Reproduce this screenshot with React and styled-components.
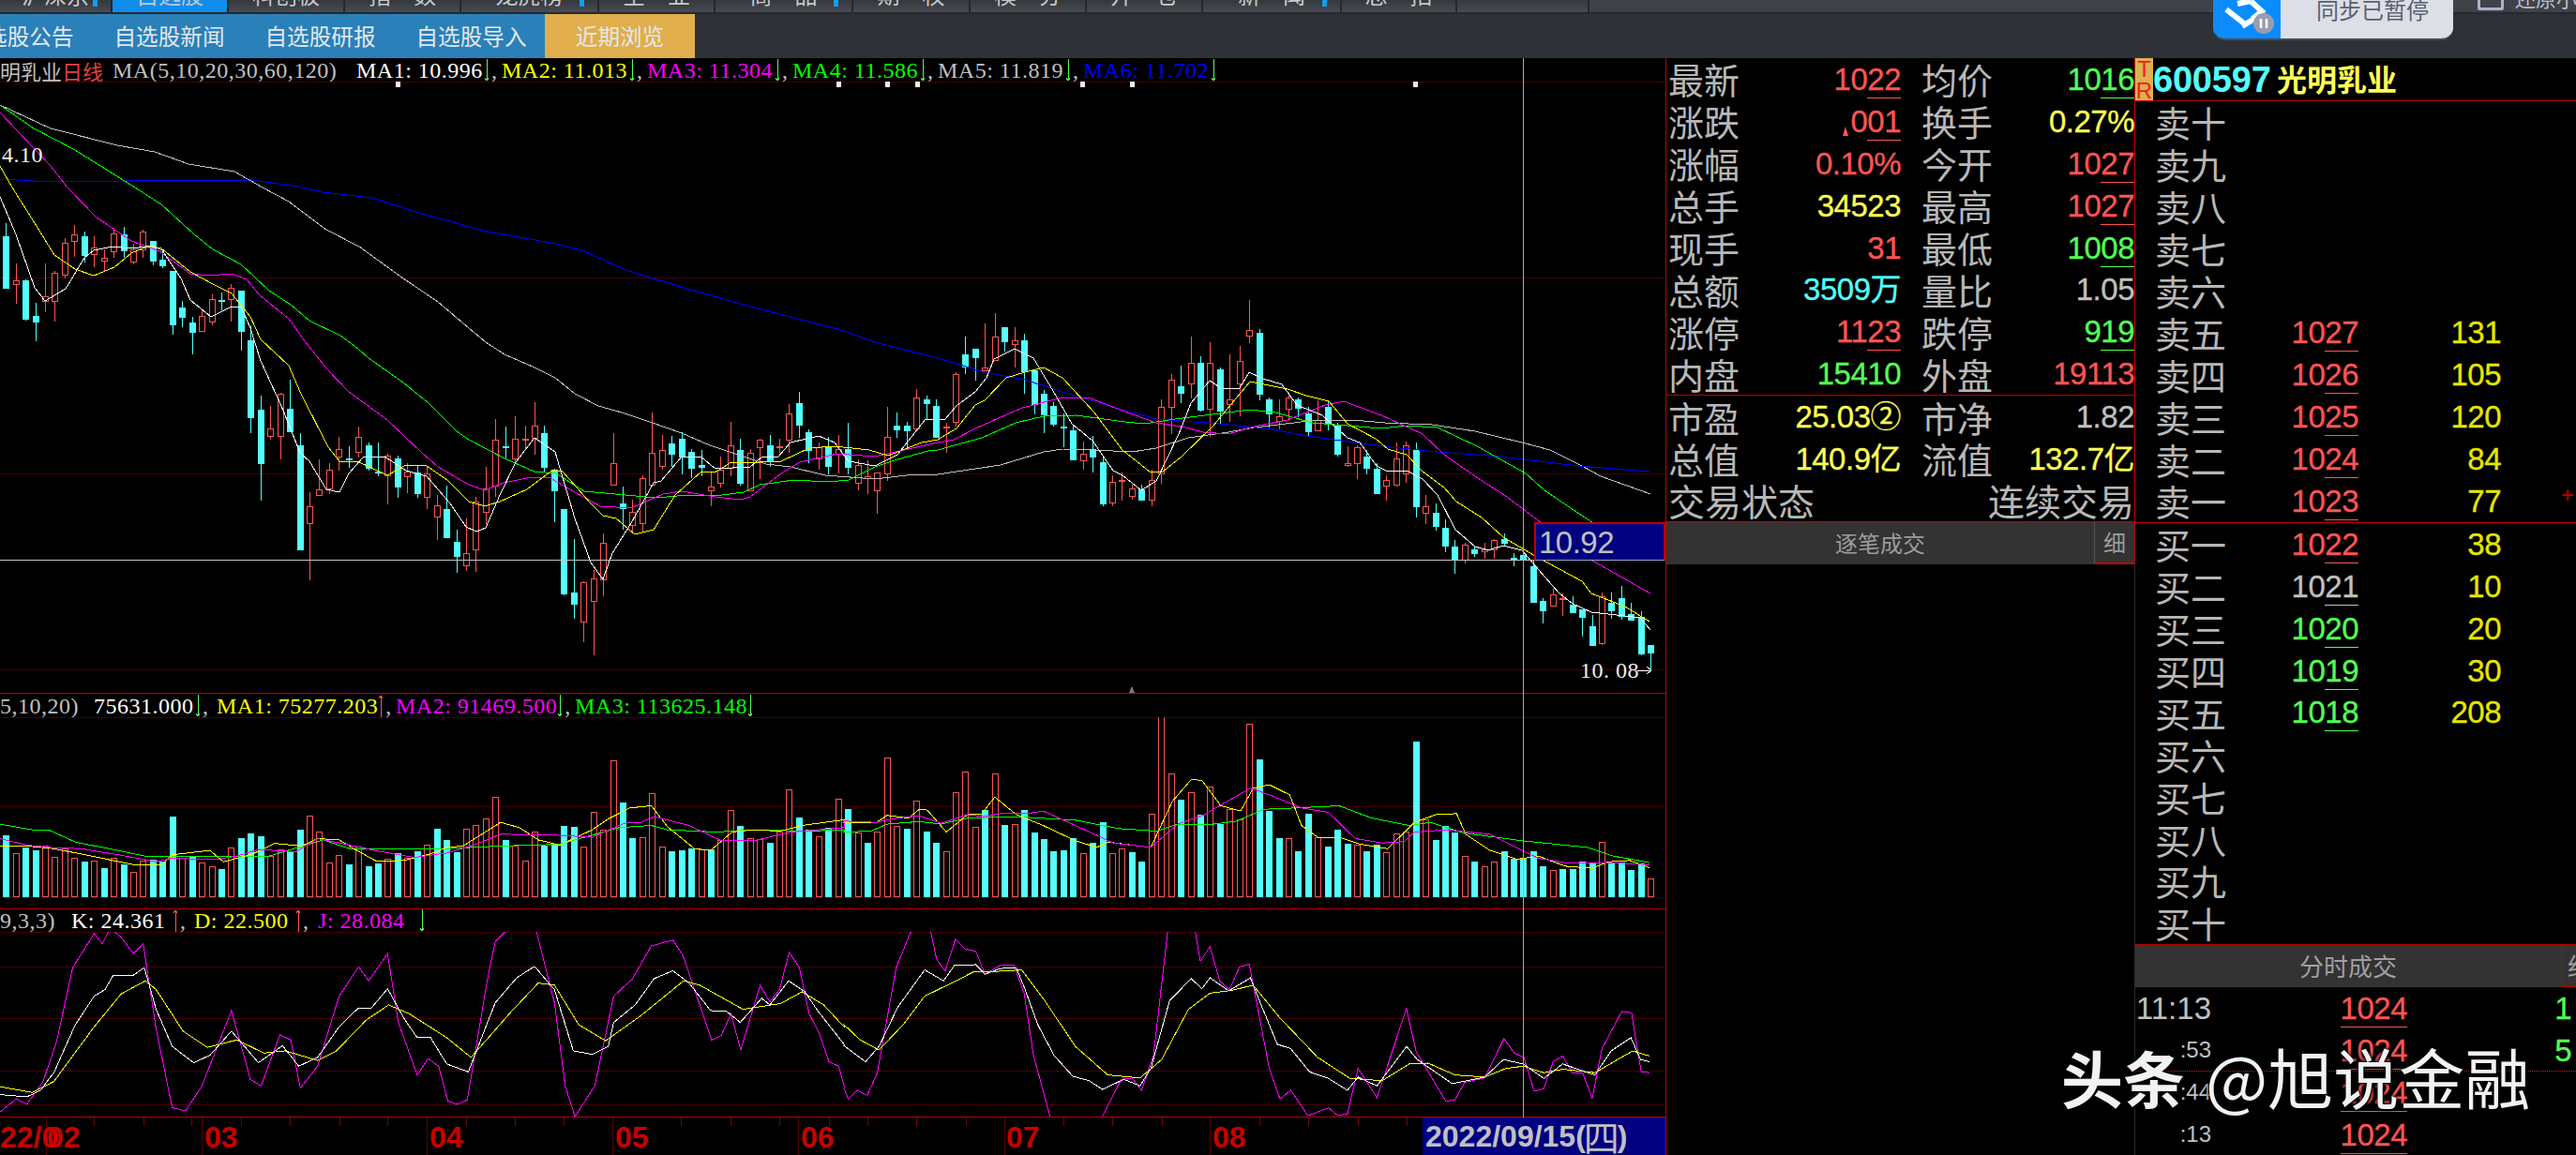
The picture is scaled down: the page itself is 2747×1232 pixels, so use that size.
import React from "react";
import styled, { createGlobalStyle } from "styled-components";

const GlobalStyle = createGlobalStyle`
  html, body {
    margin: 0;
    background: #000;
    overflow: hidden;
  }
  * {
    box-sizing: border-box;
  }
`;

const CJK = `"Noto Sans CJK SC", "Liberation Sans", sans-serif`;
const NUM = `"Liberation Sans", "Noto Sans CJK SC", sans-serif`;
const SERIF = `"Liberation Serif", "Noto Sans CJK SC", serif`;

const RED = "#ff5454";
const GREEN = "#54ff54";
const YELLOW = "#ffff54";
const CYAN = "#54ffff";
const GRAY = "#c0c0c0";
const LINE_RED = "#c00000";

// candles traced from the chart: type, body top, body bottom, high, low (3x crop units)
const SEG_A = `d156,323,115,323 u298,311,243,372 d297,420,295,426 d411,429,370,492 u349,365,243,399 u274,365,268,429 u178,281,163,290 u151,173,120,222 d156,216,141,240 u193,215,156,255 u226,236,198,270 u148,206,130,225 d150,201,126,225 u199,239,180,246 u142,199,135,225 d171,234,171,249 d231,249,205,258 d267,438,267,471 d384,414,363,447 d432,462,414,534 u412,459,390,459 u358,429,342,441 d360,362,336,393 u322,359,309,429 d330,459,330,522 d489,735,440,786 d711,882,666,1002 u772,797,699,807 u661,795,657,870 d708,780,615,780 d825,1158,786,1158 u1021,1076,975,1257 u967,986,870,986 u904,964,882,981 u838,863,798,906 d867,870,828,897 u799,848,765,864 d825,897,816,906 d909,912,816,924 u859,922,852,1014 d867,957,858,993 u910,926,882,978 d912,978,888,993 u916,992,895,1029 u1018,1055,984,1128 d1029,1119,954,1119 d1134,1179,1095,1233 u1170,1211,1059,1227`;
const SEG_B = `u857,1010,840,1080 u814,890,743,928 u658,806,591,840 d679,683,615,717 u655,719,582,735 u656,659,612,690 u613,651,537,705 d636,744,612,760 d757,819,750,921 d879,1150,879,1155 d1146,1182,975,1230 u1113,1241,1110,1305 u1102,1175,1075,1347 u988,1104,957,1158 u733,803,636,803 d861,878,807,945 u889,932,850,957 u781,926,770,954 u700,803,570,803 u691,741,642,753 d669,702,645,744 d654,712,633,768 d696,747,687,780 d738,744,690,774 u808,821,762,870 u753,797,711,810 u676,747,600,774 d690,796,654,804 u700,819,687,822 u658,683,654,783 d675,726,642,744 u679,683,654,699 u574,657,543,699 d540,609,504,651 d633,692,624,732 u682,719,666,753 d681,741,648,768 u688,703,642,765 d687,744,603,768 u738,797,720,819 u775,782,723,831 u762,819,762,894 u649,767,552,789 d612,624,570,651 d612,627,600,690 u523,623,495,625 d528,540,516,592 d549,648,528,648 u615,618,603,699 u448,602,441,615 d384,423,327,447 d366,393,366,468 u427,437,285,437 u328,402,252,402 d297,342,297,375 u340,351,297,426 d339,438,318,510 d435,543,435,576 d510,576,498,636 d549,606,537,615 d615,618,573,681 d627,720,610,720 u702,725,663,753 d687,711,645,762 d729,861,714,870 u793,860,771,870 u786,789,762,852 u814,839,801,849 d816,849,801,849 u787,851,754,870 u553,765,528,798 u466,554,447,639 d486,507,420,540 u412,479,327,525 d411,561,390,567 u412,560,345,648 d432,564,426,609 u529,545,384,600 u406,479,357,582 u307,326,210,348 d315,510,303,531 d528,573,522,618 u583,597,528,624 u522,560,510,597 d528,555,522,585 d573,630,552,648 u595,629,531,629 d552,603,531,627 d612,702,603,711 u733,740,678,744 u682,734,675,783 d711,747,690,768 d750,828,732,831 u787,806,771,852 u718,803,666,807 u676,767,663,795`;
const SEG_C = `d300,482,276,515 u481,503,444,537 d501,545,471,557 d549,608,522,626 d609,652,588,696 u604,652,597,663 d618,630,606,642 u620,625,597,648 u589,619,585,648 d585,597,567,606 d646,652,630,672 d636,652,597,690 d672,786,652,786 d783,813,774,855 u762,798,744,801 u774,778,759,831 d795,819,768,819 d810,834,810,897 d864,924,828,924 u769,918,756,924 d789,813,756,840 d774,832,735,843 d825,843,789,843 d836,951,816,957 d924,948,924,1005`;

const parseSeg = (text, base) =>
  text.split(" ").map((c) => {
    const [top, bottom, high, low] = c.slice(1).split(",").map((v) => base + Number(v) / 3);
    return { up: c[0] === "u", top, bottom, high, low };
  });

const CANDLES = [...parseSeg(SEG_A, 200), ...parseSeg(SEG_B, 250), ...parseSeg(SEG_C, 380)];

const VOLUME = `d838 u880 d867 d872 u862 u887 u868 u890 d898 u896 d913 u890 d906 u923 u896 d895 d898 d795 u890 d885 u900 u910 d915 u866 d846 d835 d840 u885 u870 d875 d825 u793 u831 u900 u883 d906 u865 d910 d902 u893 d880 u890 d876 u860 d823 d850 d878 u823 u814 u801 u750 d850 u862 u897 u829 d862 d860 d818 d820 u865 u786 u826 u668 d763 d846 u842 u743 u865 d875 d872 d868 u870 d870 u850 u780 d818 u845 u848 d855 u830 u733 d798 d825 u840 d822 u755 d778 u833 d855 u830 u660 u817 d823 u760 d831 d855 u875 u741 u692 u820 d780 u698 d814 u812 d780 d833 d848 d876 d872 d844 u880 d855 d808 u880 u868 d878 d898 u790 u566 u698 d758 u740 d792 u728 d813 u778 u803 u583 d665 d782 d846 u845 d874 d790 u843 d865 d825 d858 u860 d874 d860 u878 u835 u830 d625 u803 d850 d818 d832 u885 d898 u910 u898 d876 d892 d892 d875 d910 u918 d916 d916 d898 d903 u853 d900 d901 d918 d902 u938`.split(" ");

const candleX = (i) => 6.3 + 10.44 * i;

const MA_WHITE = [0,210,17,250,37,307,48,321,70,308,90,275,100,267,120,263,140,265,163,262,173,267,193,297,203,320,225,338,247,327,257,327,267,350,278,385,300,433,320,483,330,492,348,522,362,525,372,505,387,488,410,487,433,502,455,508,480,537,497,562,508,567,518,563,533,528,550,493,570,467,592,482,613,553,630,600,643,618,653,590,673,558,697,515,705,513,727,487,747,487,763,500,800,498,813,487,830,487,843,472,873,465,890,472,905,492,933,497,957,485,987,447,1008,447,1020,433,1040,418,1052,403,1060,383,1082,372,1102,382,1123,417,1143,452,1165,470,1187,502,1197,507,1217,523,1233,513,1257,463,1270,430,1290,406,1302,414,1322,414,1332,397,1347,404,1367,410,1383,432,1410,443,1437,467,1450,472,1468,497,1478,502,1500,502,1517,511,1533,528,1552,565,1573,583,1587,587,1603,582,1623,587,1647,615,1663,633,1677,644,1697,653,1733,657,1749,659,1760,672];
const MA_YELLOW = [0,177,13,200,37,238,58,272,80,287,100,294,122,285,140,270,157,263,172,265,203,290,227,303,247,313,267,338,278,362,308,390,320,418,350,477,362,492,383,493,413,507,433,496,455,497,477,512,500,535,517,540,533,535,562,522,590,501,600,503,630,537,643,550,657,553,677,570,697,565,720,528,748,503,762,504,780,493,810,493,833,492,863,478,890,476,927,480,947,486,983,472,1000,469,1020,457,1040,432,1050,427,1073,403,1093,397,1113,392,1133,403,1167,440,1197,480,1227,504,1240,503,1260,487,1293,455,1333,407,1373,415,1393,422,1417,428,1437,452,1467,468,1480,479,1500,485,1517,503,1540,520,1553,535,1580,552,1603,573,1637,593,1687,620,1697,633,1733,647,1759,663];
const MA_MAGENTA = [0,120,54,177,72,200,103,232,140,257,170,268,203,292,223,294,247,292,263,298,277,315,308,340,322,360,348,393,372,418,413,448,450,483,467,498,500,517,517,523,537,515,567,509,587,510,613,525,640,540,673,542,707,527,727,524,763,530,790,533,800,530,833,505,853,493,893,484,933,487,973,478,1000,472,1017,469,1040,457,1090,435,1133,424,1163,425,1197,438,1233,451,1260,455,1283,461,1310,463,1337,455,1373,448,1413,432,1433,428,1473,443,1493,452,1517,463,1540,485,1573,508,1607,530,1640,555,1698,598,1760,633];
const MA_GREEN = [0,112,36,137,80,160,144,200,172,218,207,250,227,266,257,282,287,310,310,325,330,342,363,358,382,372,393,382,430,408,457,430,487,460,500,469,540,490,570,503,593,505,623,524,667,528,700,531,733,528,770,528,793,525,810,517,847,512,883,514,905,512,933,498,957,490,990,481,1000,480,1047,467,1083,451,1113,444,1147,443,1200,450,1220,452,1253,447,1293,442,1333,437,1360,440,1400,451,1473,457,1500,454,1533,456,1577,477,1627,505,1647,523,1687,550,1760,597];
const MA_GRAY = [0,112,54,137,125,155,165,162,201,175,250,183,280,200,308,215,348,245,383,263,430,297,467,322,500,350,518,365,538,378,570,392,592,403,613,420,638,433,663,440,693,450,727,462,757,475,787,485,817,495,843,498,880,507,933,511,967,507,1000,506,1020,503,1067,496,1113,482,1133,479,1167,480,1207,482,1233,478,1267,467,1310,461,1337,456,1380,451,1400,448,1443,448,1477,451,1527,453,1573,460,1623,472,1653,480,1687,497,1707,508,1760,527];
const MA_BLUE = [0,191,36,193,134,193,268,192,312,198,344,205,397,211,446,227,487,238,518,247,537,250,593,260,623,268,667,288,733,308,800,327,847,339,900,353,933,365,1000,382,1050,397,1093,405,1133,418,1183,433,1233,447,1300,452,1350,457,1400,466,1483,477,1533,482,1600,487,1683,497,1760,503];

// lower panes were traced from two crops, left one starts at x 0, right one at x 900
const scaled = (left, right) => {
  const out = [];
  const push = (list, offset) => {
    for (let i = 0; i < list.length; i += 2) {
      out.push(offset + list[i] / 1.742, 500 + list[i + 1] / 2.142);
    }
  };
  push(left, 0);
  push(right, 900);
  return out;
};

const VOL_YELLOW = scaled(
  [0,862,50,862,100,868,170,885,250,905,300,905,320,882,390,872,415,898,470,880,510,856,560,862,590,845,630,848,660,870,700,897,750,895,800,880,830,865,860,862,930,808,965,820,1000,848,1040,860,1100,825,1130,800,1170,775,1210,770,1240,818,1290,868,1320,872,1360,830,1400,825,1450,828,1490,815,1568,802],
  [0,808,60,808,80,792,120,798,140,778,155,780,190,830,230,790,255,790,280,750,320,790,370,815,430,850,470,865,490,853,570,865,610,760,645,710,665,712,700,770,737,782,760,730,790,722,828,745,850,815,880,842,920,842,960,858,1010,868,1060,808,1100,790,1138,788,1155,835,1200,872,1250,892,1290,885,1340,908,1390,913,1420,898,1460,895,1497,912]
);
const VOL_MAGENTA = scaled(
  [0,845,50,860,100,866,150,868,220,882,290,898,320,890,400,893,440,885,480,870,550,875,590,845,630,855,700,873,770,888,830,878,880,860,930,835,1030,837,1100,842,1160,810,1190,808,1215,795,1280,815,1340,850,1400,850,1470,830,1568,820],
  [0,805,60,808,100,798,140,793,180,810,230,790,260,795,290,788,340,788,370,782,430,815,500,855,570,865,620,812,670,790,700,768,755,730,790,745,850,775,900,785,950,845,1000,855,1040,852,1060,830,1120,825,1200,835,1240,860,1290,890,1340,900,1420,900,1497,905]
);
const VOL_GREEN = scaled(
  [0,812,60,825,90,825,140,853,210,870,270,885,400,885,500,885,600,848,650,868,830,868,930,862,1040,858,1150,820,1210,815,1240,825,1330,830,1400,825,1500,828,1568,825],
  [0,830,50,828,80,812,140,806,180,812,230,798,320,795,430,803,510,822,580,828,620,812,680,813,730,805,780,778,840,775,920,770,980,798,1050,815,1090,808,1150,832,1260,850,1380,865,1430,885,1497,900]
);

const KDJ_K = scaled(
  [0,1430,50,1435,75,1420,100,1380,140,1270,175,1205,195,1190,210,1158,248,1157,268,1140,290,1235,320,1320,360,1357,390,1340,430,1285,480,1357,525,1318,555,1365,590,1345,630,1275,665,1233,690,1232,720,1188,750,1255,775,1300,800,1300,830,1360,870,1378,920,1220,960,1163,993,1137,1030,1190,1065,1330,1100,1338,1130,1320,1140,1265,1180,1225,1215,1165,1250,1147,1280,1175,1320,1238,1350,1240,1375,1265,1415,1210,1430,1225,1465,1170,1495,1195,1520,1240,1568,1315],
  [0,1318,40,1355,65,1320,100,1230,150,1145,185,1170,205,1135,245,1133,262,1155,290,1142,320,1140,335,1185,360,1270,390,1340,425,1388,455,1398,480,1418,520,1395,550,1410,570,1370,605,1215,645,1165,665,1188,680,1163,715,1193,755,1163,770,1210,805,1315,830,1325,865,1378,900,1393,935,1420,955,1390,990,1410,1045,1320,1065,1350,1130,1405,1190,1390,1225,1350,1262,1360,1300,1393,1335,1360,1395,1385,1425,1330,1462,1300,1480,1350,1497,1355]
);
const KDJ_D = scaled(
  [0,1412,60,1425,100,1400,175,1275,225,1200,270,1170,290,1190,340,1285,385,1322,440,1305,490,1335,530,1330,590,1352,625,1330,680,1260,722,1225,760,1245,830,1300,875,1345,950,1240,1000,1175,1030,1180,1075,1270,1125,1307,1190,1250,1270,1170,1300,1180,1380,1235,1450,1222,1490,1195,1530,1225,1568,1275],
  [0,1270,30,1305,65,1328,110,1270,150,1205,200,1175,240,1150,262,1150,330,1145,370,1210,430,1320,490,1385,550,1392,590,1350,640,1235,680,1198,720,1192,760,1180,810,1255,880,1345,940,1393,1000,1398,1050,1360,1085,1358,1135,1385,1190,1390,1230,1370,1262,1365,1300,1380,1335,1372,1395,1380,1465,1330,1497,1342]
);
const KDJ_J = scaled(
  [0,1470,30,1440,50,1452,80,1400,105,1310,135,1140,175,1062,190,1085,205,1050,225,1070,248,1108,266,1085,290,1280,320,1460,345,1467,375,1410,430,1238,465,1395,485,1410,520,1293,540,1305,558,1415,590,1365,630,1205,666,1138,685,1170,720,1108,740,1265,775,1385,795,1348,815,1365,832,1445,850,1452,868,1442,905,1170,920,1080,945,1050,995,1050,1030,1220,1050,1410,1068,1480,1105,1410,1140,1205,1175,1165,1210,1090,1250,1077,1268,1110,1322,1305,1340,1295,1358,1245,1376,1328,1412,1180,1430,1218,1448,1190,1466,1105,1485,1140,1503,1245,1522,1290,1540,1355,1558,1365,1568,1410],
  [0,1415,8,1440,25,1420,43,1432,62,1380,97,1140,130,1040,158,1040,172,1120,188,1148,207,1075,225,1097,245,1103,262,1155,290,1135,316,1135,335,1200,352,1340,385,1490,455,1490,480,1480,515,1395,535,1392,553,1420,575,1340,603,1040,650,1040,662,1125,680,1092,698,1170,716,1190,735,1138,753,1132,790,1370,810,1440,830,1420,862,1478,900,1460,917,1477,935,1475,955,1370,990,1437,1045,1233,1063,1332,1118,1445,1135,1442,1153,1402,1190,1392,1226,1302,1245,1335,1263,1345,1282,1422,1300,1417,1317,1355,1335,1342,1353,1380,1372,1380,1390,1438,1408,1325,1445,1240,1463,1243,1481,1378,1497,1380]
);

const toPoints = (list) => {
  const parts = [];
  for (let i = 0; i < list.length; i += 2) parts.push(`${list[i]},${list[i + 1]}`);
  return parts.join(" ");
};

const TABS = [
  { w: 120, label: "沪深京", mark: true },
  { w: 124, label: "自选股", active: true },
  { w: 124, label: "科创板" },
  { w: 124, label: "指　数" },
  { w: 147, label: "龙虎榜", mark: true },
  { w: 124, label: "全　业" },
  { w: 147, label: "商　品", mark: true },
  { w: 125, label: "期　权" },
  { w: 124, label: "模　分" },
  { w: 124, label: "开　仓" },
  { w: 148, label: "新　闻", mark: true },
  { w: 123, label: "总　招" },
  { w: 141, label: "" },
];

const STATS = [
  ["最新", "1022", RED, 1, "均价", "1016", GREEN, 1],
  ["涨跌", "001", RED, 1, "换手", "0.27%", YELLOW, 0],
  ["涨幅", "0.10%", RED, 0, "今开", "1027", RED, 1],
  ["总手", "34523", YELLOW, 0, "最高", "1027", RED, 1],
  ["现手", "31", RED, 0, "最低", "1008", GREEN, 1],
  ["总额", "3509万", CYAN, 0, "量比", "1.05", GRAY, 0],
  ["涨停", "1123", RED, 1, "跌停", "919", GREEN, 1],
  ["内盘", "15410", GREEN, 0, "外盘", "19113", RED, 0],
];

const STATS2 = [
  ["市盈", "25.03②", YELLOW, 0, "市净", "1.82", GRAY, 0],
  ["总值", "140.9亿", YELLOW, 0, "流值", "132.7亿", YELLOW, 0],
];

const ASKS = [
  ["卖十"], ["卖九"], ["卖八"], ["卖七"], ["卖六"],
  ["卖五", "1027", "131", RED],
  ["卖四", "1026", "105", RED],
  ["卖三", "1025", "120", RED],
  ["卖二", "1024", "84", RED],
  ["卖一", "1023", "77", RED],
];

const BIDS = [
  ["买一", "1022", "38", RED],
  ["买二", "1021", "10", GRAY],
  ["买三", "1020", "20", GREEN],
  ["买四", "1019", "30", GREEN],
  ["买五", "1018", "208", GREEN],
  ["买六"], ["买七"], ["买八"], ["买九"], ["买十"],
];

const TRADES = [
  { time: "11:13", big: true, price: "1024", vol: "1" },
  { time: ":53", price: "1024", vol: "5" },
  { time: ":44", price: "1024" },
  { time: ":13", price: "1024" },
];

const AXIS_LABELS = [
  { x: 0, text: "22/0" },
  { x: 50, text: "02" },
  { x: 218, text: "03" },
  { x: 458, text: "04" },
  { x: 656, text: "05" },
  { x: 854, text: "06" },
  { x: 1073, text: "07" },
  { x: 1293, text: "08" },
];
const AXIS_MAJOR = [49, 215, 455, 653, 851, 1071, 1290];
const AXIS_MINOR = [100, 153, 204, 257, 309, 362, 413, 497, 549, 601, 726, 779, 831, 884, 925, 977, 1030, 1134, 1186, 1239, 1343, 1395, 1448, 1500];
const TOP_DOTS = [424, 894, 946, 978, 1154, 1207, 1509];

const Page = styled.div`
  width: 2747px;
  height: 1232px;
  position: relative;
  overflow: hidden;
  background: #000;
  display: flex;
  flex-direction: column;
`;

const TopBar = styled.div`
  height: 15px;
  flex: none;
  display: flex;
  background: #3f4248;
  border-bottom: 2px solid #26282c;
`;

const Tab = styled.div`
  width: ${({ $w }) => $w}px;
  flex: none;
  height: 13px;
  position: relative;
  overflow: hidden;
  display: flex;
  align-items: flex-end;
  justify-content: center;
  padding-bottom: 7px;
  font: 24px/1 ${CJK};
  color: #c8c8c8;
  background: ${({ $active }) => ($active ? "#0f8ded" : "linear-gradient(#35383d, #484b52)")};
  border-right: 2px solid #26282c;
`;

const TabMark = styled.span`
  position: absolute;
  right: 14px;
  top: 0;
  width: 5px;
  height: 7px;
  background: #0aa0f0;
`;

const Restore = styled.div`
  margin-left: auto;
  display: flex;
  align-items: flex-end;
  gap: 12px;
  height: 13px;
  overflow: hidden;
  padding-bottom: 5px;
  width: 105px;
  font: 22px/1 ${CJK};
  color: #b8bcc8;
  white-space: nowrap;
`;

const RestoreIcon = styled.span`
  width: 28px;
  height: 20px;
  flex: none;
  margin-bottom: -3px;
  border: 3px solid #aab2cc;
  border-radius: 2px;
`;

const SyncPill = styled.div`
  position: absolute;
  left: 2360px;
  top: 0;
  width: 256px;
  height: 43px;
  display: flex;
  overflow: hidden;
  border-radius: 0 0 13px 13px;
  border-bottom: 2px solid #4a4d58;
`;

const SyncLogo = styled.div`
  width: 72px;
  height: 100%;
  flex: none;
  background: #0a8cff;

  svg {
    display: block;
  }
`;

const SyncText = styled.div`
  flex: 1;
  background: #dcdfe6;
  padding: 0 0 0 38px;
  font: 24px/24px ${CJK};
  color: #5a6072;

  span {
    display: block;
    margin-top: -2px;
  }
`;

const SubBar = styled.div`
  height: 47px;
  flex: none;
  display: flex;
  background: #2e3136;
`;

const SubGroup = styled.div`
  width: 581px;
  flex: none;
  display: flex;
  overflow: hidden;
  background: #2a80b9;
`;

const SubItem = styled.div`
  width: 161px;
  flex: none;
  display: flex;
  align-items: center;
  justify-content: center;
  margin-left: ${({ $first }) => ($first ? "-61px" : "0")};
  font: 23.6px/1 ${CJK};
  color: #e4e8ec;
  white-space: nowrap;
`;

const SubRecent = styled(SubItem)`
  width: 160px;
  background: #e0ae4c;
`;

const Body = styled.div`
  flex: 1;
  display: flex;
  min-height: 0;
`;

const ChartColumn = styled.div`
  width: 1777px;
  flex: none;
  position: relative;
  display: flex;
  flex-direction: column;
  border-right: 1px solid ${LINE_RED};
`;

const Pane = styled.div`
  height: ${({ $h }) => $h}px;
  flex: none;
  position: relative;
  display: flex;
  flex-direction: column;
  border-bottom: 1px solid ${LINE_RED};

  svg {
    display: block;
    flex: 1;
    min-height: 0;
  }
`;

const Legend = styled.div`
  height: ${({ $h }) => $h}px;
  flex: none;
  display: flex;
  align-items: center;
  overflow: hidden;
  white-space: nowrap;
  font: 24px/1 ${SERIF};
  color: ${GRAY};
`;

const LegendName = styled.span`
  font: 22px/1 ${CJK};
  color: ${({ $c }) => $c};
`;

const LegendItem = styled.span`
  width: ${({ $w }) => $w}px;
  flex: none;
  display: inline-flex;
  align-items: center;
`;

const LegendText = styled.span`
  min-width: ${({ $w }) => $w || 0}px;
  letter-spacing: 0.5px;
  color: ${({ $c }) => $c || GRAY};
`;

const Comma = styled.span`
  width: 10px;
  text-align: center;
  color: ${GRAY};
`;

const PriceTag = styled.span`
  position: absolute;
  left: ${({ $x }) => $x}px;
  top: ${({ $y }) => $y}px;
  font: 24px/1 ${SERIF};
  letter-spacing: 0.5px;
  color: #f0f0f0;
  white-space: nowrap;
`;

const CrossH = styled.div`
  position: absolute;
  left: 0;
  right: 0;
  top: 535px;
  height: 1px;
  background: #c4c4c4;
`;

const CrossV = styled.div`
  position: absolute;
  left: 1624px;
  top: 0;
  bottom: 40px;
  width: 1px;
  background: #a8a8a8;
`;

const ValueBadge = styled.div`
  position: absolute;
  left: 1636px;
  top: 495px;
  width: 140px;
  height: 41px;
  display: flex;
  align-items: center;
  padding-left: 3px;
  background: #000080;
  border: 2px solid ${LINE_RED};
  border-bottom: 1px solid #9aa0d0;
  font: 33px/1 ${NUM};
  letter-spacing: -0.5px;
  color: ${GRAY};
`;

const Axis = styled.div`
  height: 40px;
  flex: none;
  position: relative;
  overflow: hidden;

  svg {
    display: block;
  }
`;

const AxisLabel = styled.span`
  position: absolute;
  top: 3px;
  font: bold 32px/36px ${NUM};
  color: #c80000;
`;

const DateBadge = styled.div`
  position: absolute;
  right: 0;
  top: 0;
  width: 259px;
  height: 40px;
  display: flex;
  align-items: center;
  padding-left: 3px;
  background: #000080;
  font: bold 32px/1 ${NUM};
  color: ${GRAY};
  white-space: nowrap;
`;

const DateWeek = styled.span`
  font: 38px/1 ${CJK};
  margin: 0 -2px;
`;

const QuotePanel = styled.div`
  width: 500px;
  flex: none;
  display: flex;
  flex-direction: column;
`;

const StatsBlock = styled.div`
  flex: none;
  padding-left: 2px;
  border-right: 1px solid ${LINE_RED};
  border-bottom: 1px solid ${LINE_RED};
`;

const StatRow = styled.div`
  height: 44.9px;
  display: grid;
  grid-template-columns: 77px 171px 98px 151px;
  align-items: center;
`;

const StatLabel = styled.div`
  font: 38px/1 ${CJK};
  color: #b8b8b8;
  white-space: nowrap;
  padding-left: ${({ $second }) => ($second ? "22px" : "0")};
`;

const Value = styled.div`
  position: relative;
  justify-self: end;
  font: 33px/1 ${NUM};
  letter-spacing: -0.5px;
  -webkit-text-stroke: 0.3px ${({ $c }) => $c};
  color: ${({ $c }) => $c};
  white-space: nowrap;

  &::after {
    content: "";
    display: ${({ $line }) => ($line ? "block" : "none")};
    position: absolute;
    right: 0;
    bottom: -4px;
    width: ${({ $wide }) => ($wide ? "100%" : "36px")};
    height: 1px;
    background: ${({ $c }) => $c};
  }
`;

const UpMark = styled.span`
  position: absolute;
  left: -8px;
  bottom: 1px;
  width: 0;
  height: 0;
  border-left: 3.5px solid transparent;
  border-right: 3.5px solid transparent;
  border-bottom: 10px solid ${RED};
`;

const StateRow = styled.div`
  height: 44px;
  display: flex;
  align-items: center;
  justify-content: space-between;
  font: 39px/1 ${CJK};
  color: #b8b8b8;
`;

const FeedBand = styled.div`
  height: 45px;
  flex: none;
  display: flex;
  background: #333;
  font: 24px/1 ${CJK};
  color: #9c9c9c;
`;

const FeedTitle = styled.div`
  flex: 1;
  display: flex;
  align-items: center;
  justify-content: center;
`;

const FeedDetail = styled.div`
  width: 44px;
  flex: none;
  display: flex;
  align-items: center;
  justify-content: center;
  border-left: 1px solid #555;
  border-bottom: 2px solid ${LINE_RED};
  border-right: 1px solid ${LINE_RED};
`;

const FeedEmpty = styled.div`
  flex: 1;
  border-right: 1px solid #2a2a2a;
`;

const OrderPanel = styled.div`
  flex: 1;
  position: relative;
  display: flex;
  flex-direction: column;
  overflow: hidden;
`;

const CodeHeader = styled.div`
  height: 46px;
  flex: none;
  display: flex;
  align-items: center;
  border-bottom: 1px solid ${LINE_RED};
`;

const TrBox = styled.div`
  width: 19px;
  height: 45px;
  flex: none;
  display: flex;
  flex-direction: column;
  align-items: center;
  justify-content: center;
  background: #e0b050;
  font: 24px/23px ${NUM};
  color: #f02020;
`;

const Code = styled.span`
  font: bold 38px/1 ${NUM};
  letter-spacing: -0.2px;
  color: ${CYAN};
  width: 132px;
`;

const StockName = styled.span`
  font: bold 32px/1 ${CJK};
  color: ${YELLOW};
  margin-top: -4px;
`;

const BookBlock = styled.div`
  flex: none;
  border-bottom: 1px solid ${LINE_RED};
`;

const BookRow = styled.div`
  height: 44.9px;
  display: grid;
  grid-template-columns: 21px 90px 127px 152px;
  align-items: center;
`;

const BookLabel = styled.div`
  grid-column: 2;
  font: 38px/1 ${CJK};
  color: #b8b8b8;
  white-space: nowrap;
`;

const BookVol = styled(Value)`
  color: #e6e600;
  -webkit-text-stroke: 0.3px #e6e600;
`;

const TradeHeader = styled.div`
  height: 45px;
  flex: none;
  display: flex;
  background: #333;
  font: 26px/1 ${CJK};
  color: #a0a0a0;
`;

const TradeTitle = styled.div`
  width: 454px;
  flex: none;
  display: flex;
  align-items: center;
  justify-content: center;
`;

const TradeTab = styled.div`
  flex: 1;
  display: flex;
  align-items: center;
  padding-left: 6px;
  border-left: 1px solid ${LINE_RED};
  border-bottom: 1px solid ${LINE_RED};
  white-space: nowrap;
`;

const TradeRow = styled.div`
  height: 45px;
  flex: none;
  display: grid;
  grid-template-columns: 81px 209px 175px;
  align-items: center;
`;

const TradeTime = styled.div`
  justify-self: end;
  font: ${({ $big }) => ($big ? "33px" : "24px")}/1 ${NUM};
  color: ${GRAY};
`;

const TradeVol = styled(Value)`
  color: ${GREEN};
  -webkit-text-stroke: 0.3px ${GREEN};
`;

const Crumb = styled.span`
  position: absolute;
  right: 2px;
  top: 454px;
  font: 24px/1 ${NUM};
  color: ${LINE_RED};
`;

const DottedLine = styled.div`
  position: absolute;
  left: 0;
  right: 0;
  top: 1080px;
  border-top: 1px dotted #b03030;
`;

const Watermark = styled.div`
  position: absolute;
  left: 2198px;
  top: 1106px;
  display: flex;
  align-items: center;
  font: 70px/84px ${CJK};
  color: #f2f2f2;
  white-space: nowrap;
  text-shadow: 0 0 3px #000, 0 0 6px #000, 1px 1px 2px #000;
`;

const WatermarkBrand = styled.span`
  font-weight: 700;
  font-size: 66px;
  margin-right: 22px;
`;

const LegendArrow = ({ up }) => (
  <svg width="6" height="24" viewBox="0 0 6 24" style={{ flex: "none" }}>
    {up ? (
      <path d="M3 24V1M1 4L3 1L5 4" stroke={RED} fill="none" strokeWidth="1" shapeRendering="crispEdges" />
    ) : (
      <path d="M3 0V23M1 20L3 23L5 20" stroke={GREEN} fill="none" strokeWidth="1" shapeRendering="crispEdges" />
    )}
  </svg>
);

const MaEntry = ({ text, color, up, last, width, textWidth }) => (
  <LegendItem $w={width}>
    <LegendText $c={color} $w={textWidth}>
      {text}
    </LegendText>
    <LegendArrow up={up} />
    {!last && <Comma>,</Comma>}
  </LegendItem>
);

const Trend = ({ points, color }) => (
  <polyline points={toPoints(points)} fill="none" stroke={color} strokeWidth="1" />
);

const Candle = ({ c, i }) => {
  const x = Math.round(candleX(i)) + 0.5;
  const color = c.up ? RED : CYAN;
  return (
    <g stroke={color} fill={c.up ? "#000" : color}>
      <line x1={x} x2={x} y1={c.high} y2={c.low} />
      <rect x={x - 3} y={c.top} width={6} height={Math.max(c.bottom - c.top, 1)} />
    </g>
  );
};

const MainChart = () => (
  <svg viewBox="0 87 1776 652" shapeRendering="crispEdges">
    {[87, 296, 505, 714].map((y) => (
      <line key={y} x1="0" x2="1776" y1={y} y2={y} stroke="#4a0000" />
    ))}
    {TOP_DOTS.map((x) => (
      <rect key={x} x={x - 2} y="87" width="5" height="6" fill="#f0f0f0" />
    ))}
    {CANDLES.map((c, i) => (
      <Candle key={i} c={c} i={i} />
    ))}
    <Trend points={MA_GRAY} color="#c0c0c0" />
    <Trend points={MA_BLUE} color="#0000ff" />
    <Trend points={MA_GREEN} color="#00ff00" />
    <Trend points={MA_MAGENTA} color="#ff00ff" />
    <Trend points={MA_YELLOW} color="#ffff00" />
    <Trend points={MA_WHITE} color="#ffffff" />
    <path d="M1746 715H1761M1756 711L1761 715L1756 719" fill="none" stroke="#fff" />
    <path d="M1204 739L1207 732L1210 739Z" fill="#777" />
  </svg>
);

const VolumeChart = () => (
  <svg viewBox="0 765 1776 204" shapeRendering="crispEdges">
    {[765, 860, 957].map((y) => (
      <line key={y} x1="0" x2="1776" y1={y} y2={y} stroke="#4a0000" />
    ))}
    {VOLUME.map((v, i) => {
      const x = Math.round(candleX(i)) + 0.5;
      const top = 500 + Number(v.slice(1)) / 2.142;
      const up = v[0] === "u";
      return (
        <rect
          key={i}
          x={x - 3}
          y={top}
          width={6}
          height={956.5 - top}
          fill={up ? "#000" : CYAN}
          stroke={up ? RED : CYAN}
        />
      );
    })}
    <Trend points={VOL_GREEN} color="#00ff00" />
    <Trend points={VOL_YELLOW} color="#ffff00" />
    <Trend points={VOL_MAGENTA} color="#ff00ff" />
  </svg>
);

const KdjChart = () => (
  <svg viewBox="0 994 1776 197" shapeRendering="crispEdges">
    {[994, 1031, 1086, 1142, 1178].map((y) => (
      <line key={y} x1="0" x2="1776" y1={y} y2={y} stroke="#4a0000" />
    ))}
    <Trend points={KDJ_J} color="#ff00ff" />
    <Trend points={KDJ_D} color="#ffff00" />
    <Trend points={KDJ_K} color="#ffffff" />
  </svg>
);

const StatCells = ({ row }) => (
  <>
    <StatLabel>{row[0]}</StatLabel>
    <Value $c={row[2]} $line={row[3]}>
      {row[0] === "涨跌" && <UpMark />}
      {row[1]}
    </Value>
    <StatLabel $second>{row[4]}</StatLabel>
    <Value $c={row[6]} $line={row[7]}>
      {row[5]}
    </Value>
  </>
);

const BookLine = ({ row }) => (
  <BookRow>
    <BookLabel>{row[0]}</BookLabel>
    {row[1] && (
      <Value $c={row[3]} $line>
        {row[1]}
      </Value>
    )}
    {row[2] && <BookVol>{row[2]}</BookVol>}
  </BookRow>
);

export default function App() {
  return (
    <Page>
      <GlobalStyle />
      <TopBar>
        {TABS.map((t) => (
          <Tab key={t.w + t.label} $w={t.w} $active={t.active}>
            {t.label}
            {t.mark && <TabMark />}
          </Tab>
        ))}
        <Restore>
          <RestoreIcon />
          还原小
        </Restore>
      </TopBar>
      <SyncPill>
        <SyncLogo>
          <svg width="72" height="42" viewBox="0 0 72 42">
            <path
              d="M14 10L33 25M26 4L40 1M40 1L52 12L42 20M44 20L31 28"
              fill="none"
              stroke="#fff"
              strokeWidth="6"
            />
            <circle cx="54" cy="25" r="11" fill="#9a9db0" />
            <path d="M51 20V30M57 20V30" stroke="#fff" strokeWidth="2.5" />
          </svg>
        </SyncLogo>
        <SyncText>
          <span>同步已暂停</span>
        </SyncText>
      </SyncPill>

      <SubBar>
        <SubGroup>
          <SubItem $first>自选股公告</SubItem>
          <SubItem>自选股新闻</SubItem>
          <SubItem>自选股研报</SubItem>
          <SubItem>自选股导入</SubItem>
        </SubGroup>
        <SubRecent>近期浏览</SubRecent>
      </SubBar>

      <Body>
        <ChartColumn>
          <Pane $h={678}>
            <Legend $h={25}>
              <LegendItem $w={120}>
                <LegendName $c={GRAY}>明乳业</LegendName>
                <LegendName $c="#e04040">日线</LegendName>
              </LegendItem>
              <LegendItem $w={260}>
                <LegendText>MA(5,10,20,30,60,120)</LegendText>
              </LegendItem>
              <MaEntry width={155} textWidth={136} text="MA1: 10.996" color="#ffffff" />
              <MaEntry width={155} textWidth={136} text="MA2: 11.013" color="#ffff00" />
              <MaEntry width={155} textWidth={136} text="MA3: 11.304" color="#ff00ff" />
              <MaEntry width={155} textWidth={136} text="MA4: 11.586" color="#00ff00" />
              <MaEntry width={155} textWidth={136} text="MA5: 11.819" color={GRAY} />
              <MaEntry width={155} textWidth={136} text="MA6: 11.702" color="#0000ff" last />
            </Legend>
            <MainChart />
            <PriceTag $x={2} $y={91}>4.10</PriceTag>
            <PriceTag $x={1685} $y={641}>10. 08</PriceTag>
            <CrossH />
            <ValueBadge>10.92</ValueBadge>
          </Pane>
          <Pane $h={230}>
            <Legend $h={25}>
              <LegendItem $w={100}>
                <LegendText>5,10,20)</LegendText>
              </LegendItem>
              <MaEntry width={131} textWidth={108} text="75631.000" color="#ffffff" />
              <MaEntry width={191} textWidth={168} text="MA1: 75277.203" color="#ffff00" up />
              <MaEntry width={191} textWidth={168} text="MA2: 91469.500" color="#ff00ff" />
              <MaEntry width={210} textWidth={180} text="MA3: 113625.148" color="#00ff00" last />
            </Legend>
            <VolumeChart />
          </Pane>
          <Pane $h={222}>
            <Legend $h={24}>
              <LegendItem $w={76}>
                <LegendText>9,3,3)</LegendText>
              </LegendItem>
              <MaEntry width={131} textWidth={108} text="K: 24.361" color="#ffffff" up />
              <MaEntry width={132} textWidth={108} text="D: 22.500" color="#ffff00" up />
              <MaEntry width={131} textWidth={108} text="J: 28.084" color="#ff00ff" last />
            </Legend>
            <KdjChart />
          </Pane>
          <Axis>
            <svg width="1776" height="40" viewBox="0 0 1776 40" shapeRendering="crispEdges">
              {AXIS_MAJOR.map((x) => (
                <line key={x} x1={x} x2={x} y1="0" y2="40" stroke="#5a0000" />
              ))}
              {AXIS_MINOR.map((x) => (
                <line key={x} x1={x} x2={x} y1="0" y2="9" stroke="#7a0000" />
              ))}
            </svg>
            {AXIS_LABELS.map((l) => (
              <AxisLabel key={l.text} style={{ left: l.x }}>
                {l.text}
              </AxisLabel>
            ))}
            <DateBadge>
              2022/09/15(<DateWeek>四</DateWeek>)
            </DateBadge>
          </Axis>
          <CrossV />
        </ChartColumn>

        <QuotePanel>
          <StatsBlock>
            {STATS.map((row) => (
              <StatRow key={row[0]}>
                <StatCells row={row} />
              </StatRow>
            ))}
          </StatsBlock>
          <StatsBlock>
            {STATS2.map((row) => (
              <StatRow key={row[0]}>
                <StatCells row={row} />
              </StatRow>
            ))}
            <StateRow>
              <span>交易状态</span>
              <span>连续交易</span>
            </StateRow>
          </StatsBlock>
          <FeedBand>
            <FeedTitle>逐笔成交</FeedTitle>
            <FeedDetail>细</FeedDetail>
          </FeedBand>
          <FeedEmpty />
        </QuotePanel>

        <OrderPanel>
          <CodeHeader>
            <TrBox>
              <span>T</span>
              <span>R</span>
            </TrBox>
            <Code>600597</Code>
            <StockName>光明乳业</StockName>
          </CodeHeader>
          <BookBlock>
            {ASKS.map((row) => (
              <BookLine key={row[0]} row={row} />
            ))}
          </BookBlock>
          <BookBlock>
            {BIDS.map((row) => (
              <BookLine key={row[0]} row={row} />
            ))}
          </BookBlock>
          <TradeHeader>
            <TradeTitle>分时成交</TradeTitle>
            <TradeTab>细</TradeTab>
          </TradeHeader>
          {TRADES.map((t) => (
            <TradeRow key={t.time}>
              <TradeTime $big={t.big}>{t.time}</TradeTime>
              <Value $c={RED} $line $wide>
                {t.price}
              </Value>
              {t.vol && <TradeVol>{t.vol}</TradeVol>}
            </TradeRow>
          ))}
          <Crumb>+</Crumb>
          <DottedLine />
        </OrderPanel>
      </Body>

      <Watermark>
        <WatermarkBrand>头条</WatermarkBrand>@旭说金融
      </Watermark>
    </Page>
  );
}
